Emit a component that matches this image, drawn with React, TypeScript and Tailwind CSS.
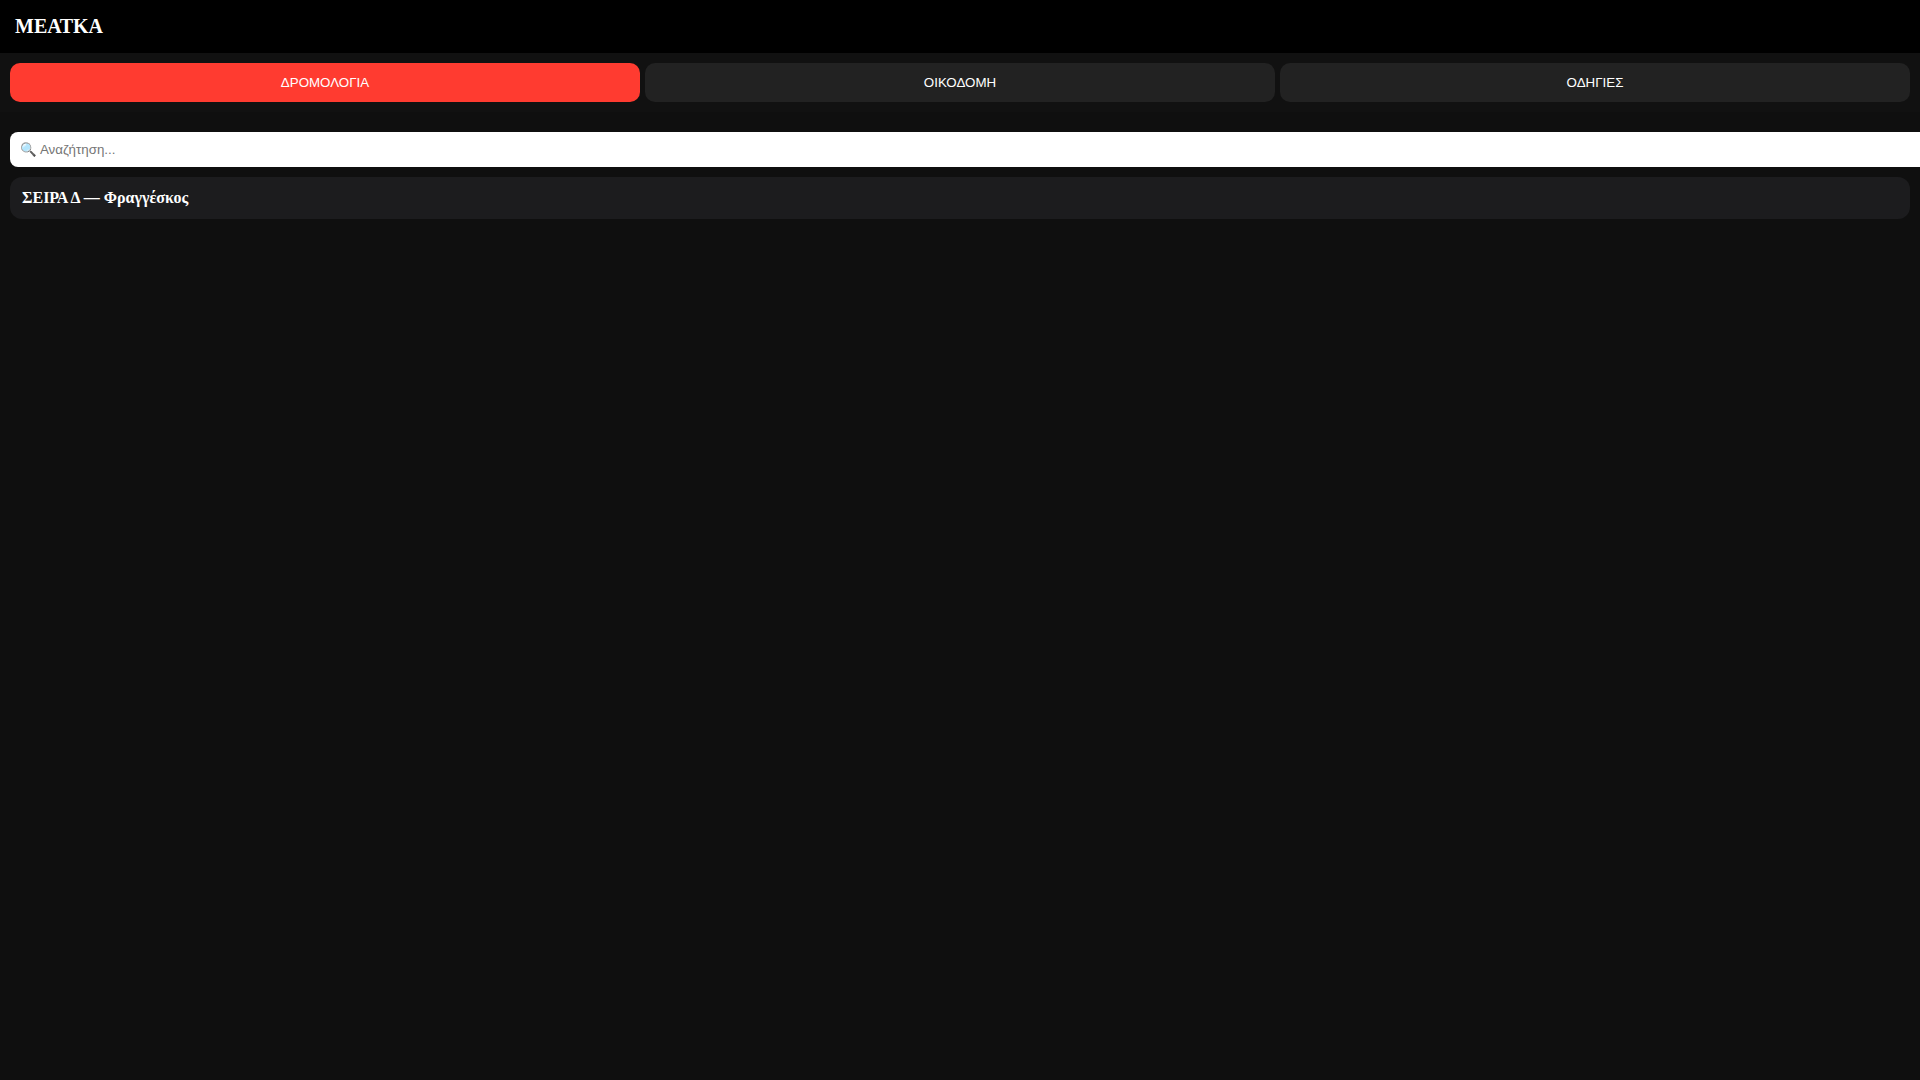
import React, { useState } from "react";

const TABS = ["ΔΡΟΜΟΛΟΓΙΑ", "ΟΙΚΟΔΟΜΗ", "ΟΔΗΓΙΕΣ"];

export default function App() {
  const [active, setActive] = useState(0);

  return (
    <div className="min-h-screen overflow-x-hidden bg-[#0f0f0f] font-['Liberation_Serif',serif] text-white">
      <header className="bg-black p-[15px] text-[20px] leading-[23px] font-bold">ΜΕΑΤΚΑ</header>

      <nav className="flex gap-[5px] bg-[#111111] p-[10px]">
        {TABS.map((tab, i) => (
          <button
            key={tab}
            onClick={() => setActive(i)}
            className={[
              "flex-1 rounded-[10px] py-[12px] font-['Liberation_Sans',sans-serif] text-[13.33px] leading-[15px] text-white",
              i === active ? "bg-[#ff3b30]" : "bg-[#222222]",
            ].join(" ")}
          >
            {tab}
          </button>
        ))}
      </nav>

      <main className="p-[10px] pt-[20px]">
        <input
          type="text"
          placeholder="🔍 Αναζήτηση..."
          className="mb-[10px] box-content block w-full rounded-[8px] bg-white p-[10px] font-['Liberation_Sans',sans-serif] text-[13.33px] leading-[15px] text-black outline-none placeholder:text-[#757575]"
        />
        <div className="rounded-[12px] bg-[#1c1c1e] p-[12px] text-[16px] leading-[18px] font-bold">
          ΣΕΙΡΑ Δ — Φραγγέσκος
        </div>
      </main>
    </div>
  );
}
